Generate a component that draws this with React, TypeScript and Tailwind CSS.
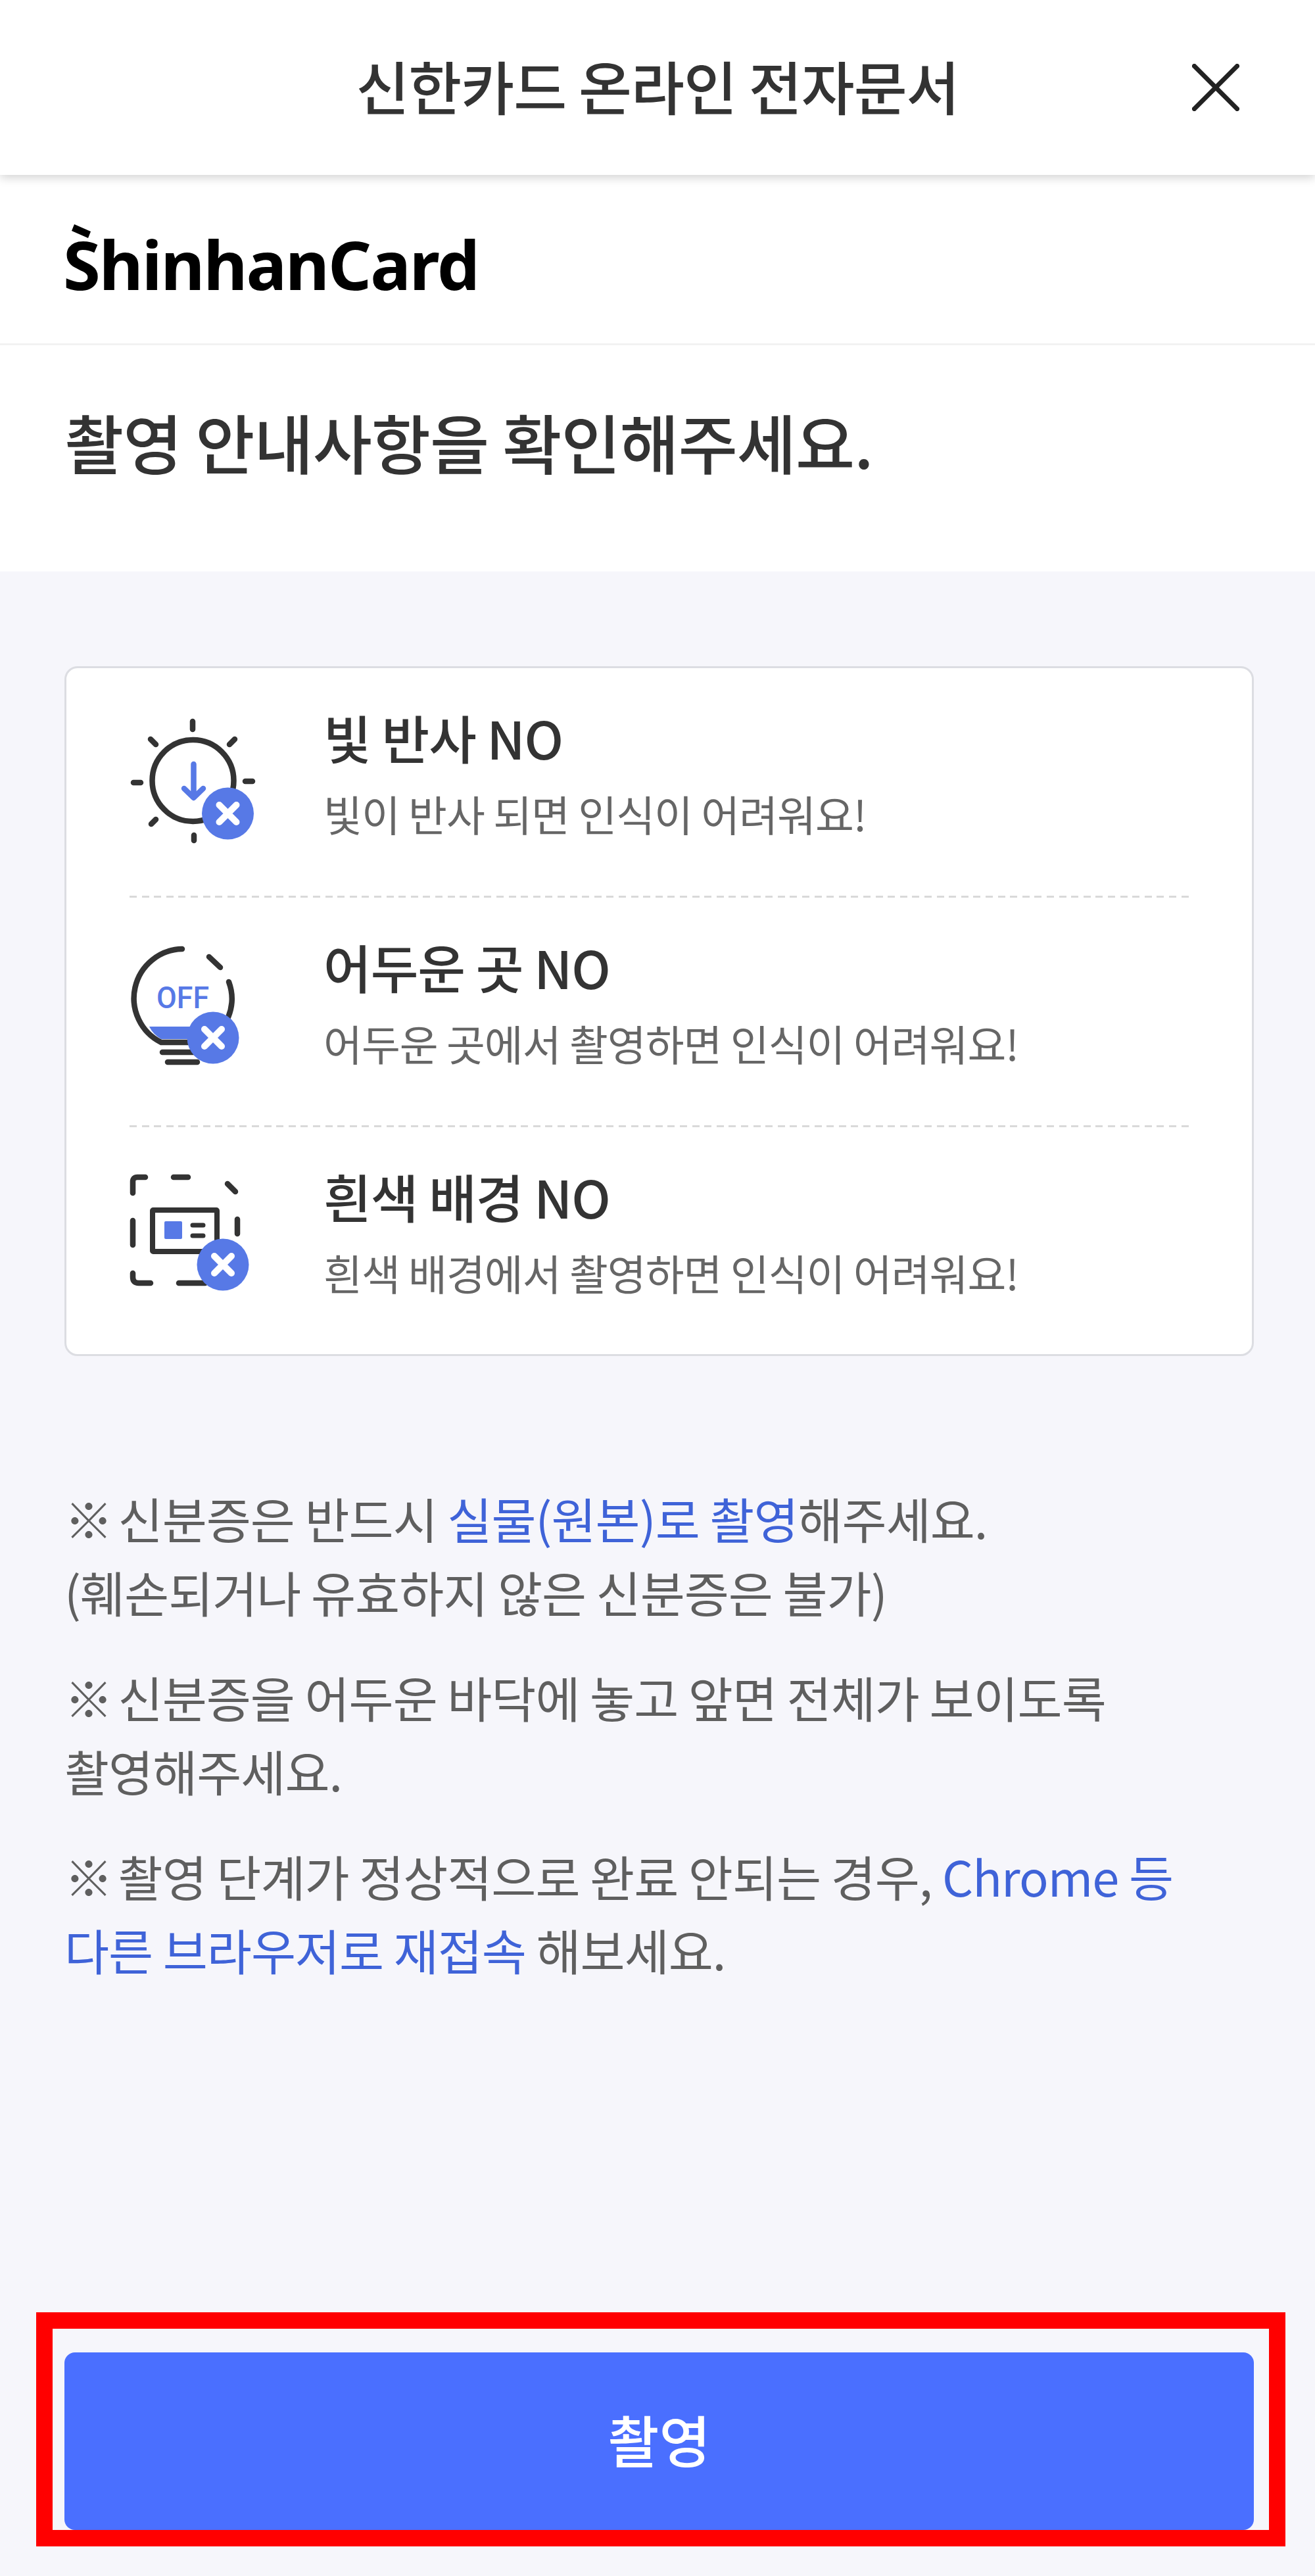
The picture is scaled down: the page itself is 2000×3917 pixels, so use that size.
import React from 'react';

const FONT = "font-['Noto_Sans_CJK_KR','Noto_Sans',sans-serif]";

const Badge: React.FC<{ cx: number; cy: number }> = ({ cx, cy }) => (
  <g>
    <circle cx={cx} cy={cy} r={39.5} fill="#5779e6" />
    <path
      d={`M${cx - 13} ${cy - 13}L${cx + 13} ${cy + 13}M${cx + 13} ${cy - 13}L${cx - 13} ${cy + 13}`}
      stroke="#fff"
      strokeWidth={10}
      strokeLinecap="round"
    />
  </g>
);

const SunIcon: React.FC = () => (
  <svg width="240" height="240" viewBox="27 10 240 240" fill="none" className="shrink-0">
    <circle cx={123.5} cy={128} r={62} stroke="#333" strokeWidth={8.5} />
    <path
      d="M123 38V50M125 211V219M33 131H44M203 129H214M59 65L67 73M187 65L179 73M67 187L60 194"
      stroke="#333"
      strokeWidth={8.5}
      strokeLinecap="round"
    />
    <path d="M124.500 103V152M110 140L124.500 154L139 140" stroke="#5779e6" strokeWidth={8.5} strokeLinecap="round" strokeLinejoin="round" />
    <Badge cx={176.500} cy={178} />
  </svg>
);

const BulbIcon: React.FC = () => (
  <svg width="240" height="240" viewBox="27 8 240 240" fill="none" className="shrink-0">
    <path d="M57 151H125V170H75Q63 163 57 151Z" fill="#5779e6" />
    <path d="M107 33A75 75 0 0 0 75 175H120" stroke="#333" strokeWidth={8.5} strokeLinecap="round" />
    <path d="M148 45L165 61M178 83Q188 110 177 137M77 190H125M85 205H130" stroke="#333" strokeWidth={8.5} strokeLinecap="round" />
    <text x={68} y={123} fontFamily="'Roboto', sans-serif" fontWeight={500} fontSize={47} fill="#5779e6" textLength={80} lengthAdjust="spacingAndGlyphs">
      OFF
    </text>
    <Badge cx={154} cy={168} />
  </svg>
);

const IdIcon: React.FC = () => (
  <svg width="240" height="240" viewBox="27 8 240 240" fill="none" className="shrink-0">
    <path
      d="M32 55V38Q32 31 39 31H51M94 31H116M176 41L188 53M32 97V134M191 95V117M32 177V183Q32 192 41 192H59M102 192H142"
      stroke="#333"
      strokeWidth={8.5}
      strokeLinecap="round"
    />
    <rect x={62} y={81} width={98} height={63} rx={1} stroke="#333" strokeWidth={8} />
    <rect x={80} y={98} width={27} height={27} rx={2} fill="#5779e6" />
    <path d="M123 104H139M123 120H139" stroke="#333" strokeWidth={7} strokeLinecap="round" />
    <Badge cx={169} cy={164} />
  </svg>
);

const rows = [
  { icon: <SunIcon />, title: '빛 반사 NO', desc: '빛이 반사 되면 인식이 어려워요!' },
  { icon: <BulbIcon />, title: '어두운 곳 NO', desc: '어두운 곳에서 촬영하면 인식이 어려워요!' },
  { icon: <IdIcon />, title: '흰색 배경 NO', desc: '흰색 배경에서 촬영하면 인식이 어려워요!' },
];

export default function App() {
  return (
    <div className={`${FONT} relative flex h-[3917px] w-[2000px] flex-col bg-[#f6f6fb] text-[#333]`}>
      {/* Header */}
      <header className="z-10 grid h-[266px] grid-cols-[1fr_auto_1fr] items-center bg-white shadow-[0_4px_14px_rgba(0,0,0,0.18)]">
        <div />
        <h1 className="pb-[8px] text-[88px] font-medium leading-none tracking-[-1px]">신한카드 온라인 전자문서</h1>
        <div className="flex justify-end pr-[115px]">
          <svg width="72" height="72" viewBox="0 0 72 72" fill="none">
            <path d="M1 1L71 71M71 1L1 71" stroke="#222" strokeWidth={7} />
          </svg>
        </div>
      </header>

      {/* Logo */}
      <div className="flex h-[259px] items-center border-b-[3px] border-[#f2f2f2] bg-white pl-[96px] pt-[14px]">
        <span className="relative font-['Noto_Sans',sans-serif] text-[103px] font-bold leading-none tracking-[-2px] text-black">
          ShinhanCard
          <svg width="29" height="21" viewBox="0 0 29 21" className="absolute left-[13px] top-[-9px]">
            <path d="M4 0L29 11L25 21L0 10Z" fill="#000" />
          </svg>
        </span>
      </div>

      {/* Headline */}
      <div className="h-[344px] bg-white pl-[98px] pt-[95px]">
        <h2 className="text-[98px] font-medium leading-[100px] tracking-[-1px]">촬영 안내사항을 확인해주세요.</h2>
      </div>

      {/* Notice card */}
      <div className="ml-[98px] mr-[93px] mt-[144px] rounded-[20px] border-[3px] border-[#dcdde2] bg-white px-[96px]">
        {rows.map((row, i) => (
          <div key={row.title}>
            <div className={i < rows.length - 1 ? 'flex h-[346px] items-center' : 'flex h-[345px] items-center'}>
              <div className="w-[295px] shrink-0">{row.icon}</div>
              <div className="mb-[31px]">
                <p className="text-[79px] font-medium leading-[100px] tracking-[-1px]">{row.title}</p>
                <p className="mt-[25px] text-[64px] leading-[80px] tracking-[-1px] text-[#666]">{row.desc}</p>
              </div>
            </div>
            {i < rows.length - 1 && (
              <div className="h-[3px] bg-[repeating-linear-gradient(90deg,#d9d9d9_0_11px,transparent_11px_18.6px)]" />
            )}
          </div>
        ))}
      </div>

      {/* Notes */}
      <div className="mx-[98px] mt-[190px] flex flex-col gap-[48px] text-[74px] leading-[112px] tracking-[-1px] text-[#5f5f5f]">
        <p>
          <span className="mr-[-7px]">※</span> 신분증은 반드시 <span className="text-[#3f63d8]">실물(원본)로 촬영</span>해주세요.
          <br />
          (훼손되거나 유효하지 않은 신분증은 불가)
        </p>
        <p>
          <span className="mr-[-7px]">※</span> 신분증을 어두운 바닥에 놓고 앞면 전체가 보이도록
          <br />
          촬영해주세요.
        </p>
        <p>
          <span className="mr-[-7px]">※</span> 촬영 단계가 정상적으로 완료 안되는 경우, <span className="text-[#3f63d8]">Chrome 등</span>
          <br />
          <span className="text-[#3f63d8]">다른 브라우저로 재접속</span> 해보세요.
        </p>
      </div>

      {/* Button */}
      <div className="mt-auto pb-[70px] pl-[98px] pr-[93px]">
        <button className="flex h-[270px] w-full items-center justify-center rounded-[16px] bg-[#4a6fff] pb-[8px] text-[85px] font-medium text-white">
          촬영
        </button>
      </div>

      {/* Red highlight box */}
      <div className="pointer-events-none absolute left-[55px] top-[3516px] h-[356px] w-[1900px] border-[25px] border-[#ff0000]" />
    </div>
  );
}
